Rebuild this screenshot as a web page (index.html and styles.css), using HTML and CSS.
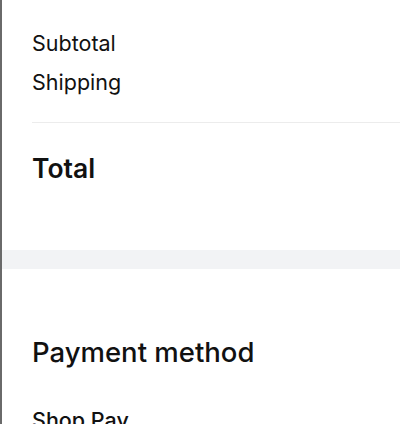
FILE: index.html
```html
<!DOCTYPE html>
<html lang="en">
<head>
    <meta charset="UTF-8">
    <meta name="viewport" content="width=device-width, initial-scale=1.0">
    <title>Checkout</title>
    <link rel="stylesheet" href="styles.css">
</head>
<body>
    <div class="page">
        <section class="summary">
            <div class="rows">
                <div class="row">Subtotal</div>
                <div class="row">Shipping</div>
            </div>
            <div class="total">Total</div>
        </section>

        <div class="band"></div>

        <section class="payment">
            <h2>Payment method</h2>
            <div class="option">Shop Pay</div>
        </section>
    </div>
</body>
</html>
```

FILE: styles.css
```css
body {
    margin: 0;
    font-family: Inter, "Noto Sans", sans-serif;
    color: #111;
    background: #fff;
}
.page {
    min-height: 424px;
    border-left: 2px solid #6a6a6a;
    overflow: hidden;
}
.summary {
    padding: 30px 0 66px 30px;
}
.rows {
    display: flex;
    flex-direction: column;
    gap: 13px;
    padding-bottom: 27px;
    border-bottom: 1px solid #ececec;
}
.row {
    font-size: 21.5px;
    line-height: 26px;
}
.total {
    margin-top: 29px;
    font-size: 26.5px;
    line-height: 32px;
    font-weight: 600;
}
.band {
    height: 19px;
    background: #f2f3f5;
}
.payment {
    padding: 67px 0 0 30px;
}
.payment h2 {
    margin: 0;
    font-size: 27.5px;
    line-height: 33px;
    font-weight: 500;
}
.option {
    margin-top: 38px;
    font-size: 21.5px;
    line-height: 26px;
    font-weight: 500;
}
```
